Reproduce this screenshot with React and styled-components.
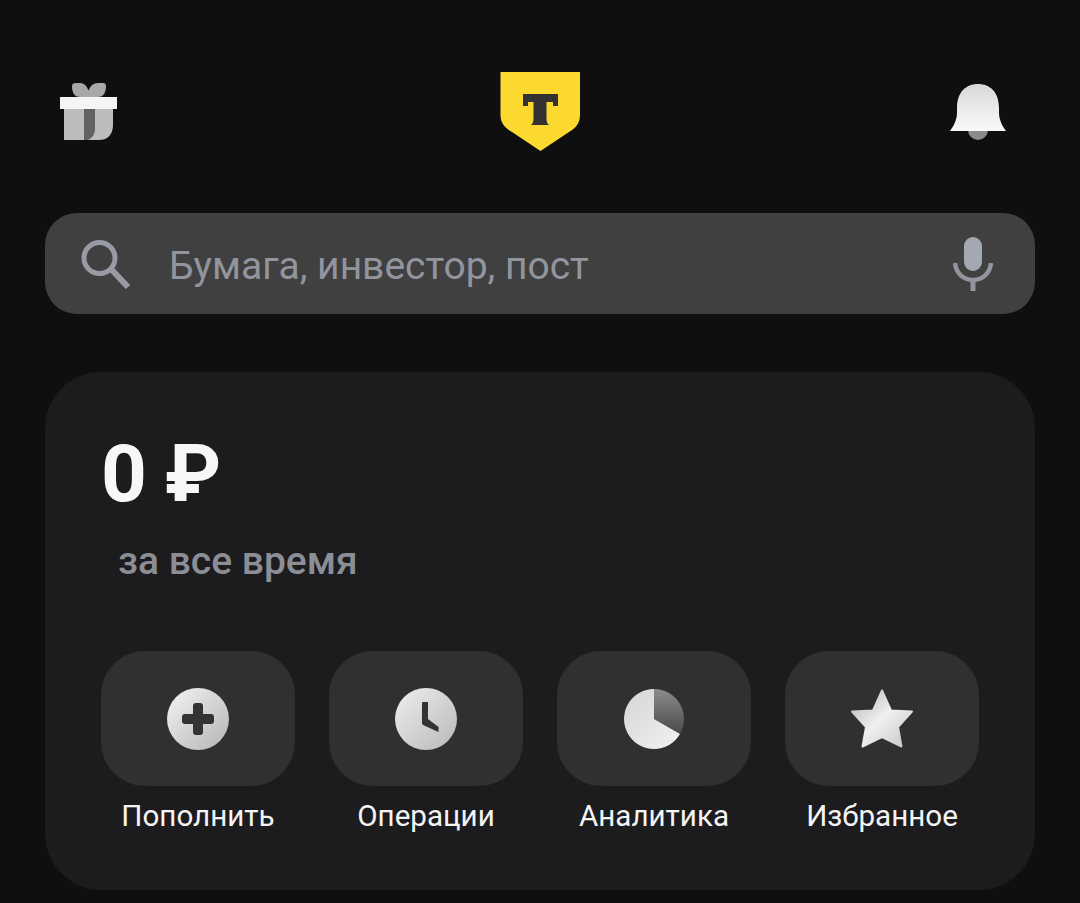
import styled, { createGlobalStyle } from 'styled-components';

const GlobalStyle = createGlobalStyle`
	html, body {
		margin: 0;
		padding: 0;
		background: #0f0f10;
	}
`;

const Page = styled.div`
	width: 1080px;
	height: 903px;
	box-sizing: border-box;
	padding: 72px 45px 0;
	overflow: hidden;
	background: #0f0f10;
	font-family: Roboto, 'Liberation Sans', sans-serif;
`;

const Header = styled.header`
	height: 79px;
	padding: 0 15px;
	display: grid;
	grid-template-columns: 1fr auto 1fr;
	align-items: start;
`;

const HeaderIcon = styled.svg`
	display: block;
	margin-top: ${(p) => p.$top || 0}px;
	margin-right: ${(p) => p.$right || 0}px;
	justify-self: ${(p) => p.$justify || 'start'};
`;

const SearchBar = styled.div`
	height: 101px;
	margin-top: 62px;
	padding: 0 42px 0 36px;
	box-sizing: border-box;
	display: flex;
	align-items: center;
	border-radius: 32px;
	background: #404040;
`;

const SearchGlyph = styled.svg`
	flex: none;
	margin-right: 38px;
`;

const Placeholder = styled.div`
	flex: 1;
	padding-top: 5px;
	font-size: 39px;
	line-height: 46px;
	color: #92959e;
`;

const Card = styled.section`
	height: 518px;
	margin-top: 58px;
	padding: 56px;
	box-sizing: border-box;
	border-radius: 56px;
	background: #1c1c1e;
`;

const Amount = styled.div`
	font-size: 80px;
	line-height: 92px;
	font-weight: 700;
	word-spacing: -2px;
	color: #f6f7f8;
`;

const Period = styled.div`
	margin: 20px 0 0 17px;
	font-size: 39px;
	line-height: 42px;
	font-weight: 500;
	color: #8c8e96;
`;

const Actions = styled.div`
	margin-top: 69px;
	display: grid;
	grid-template-columns: repeat(4, 194px);
	column-gap: 34px;
`;

const Action = styled.div`
	display: flex;
	flex-direction: column;
	align-items: center;
`;

const Tile = styled.div`
	width: 194px;
	height: 135px;
	display: flex;
	align-items: center;
	justify-content: center;
	border-radius: 44px;
	background: #303032;
`;

const Label = styled.div`
	margin-top: 13px;
	font-size: 29.6px;
	line-height: 34px;
	white-space: nowrap;
	color: #f4f4f5;
`;

function GiftIcon() {
	return (
		<HeaderIcon $top={11} width="58" height="58" viewBox="0 0 58 58">
			<path d="M12 3Q12 0 16 0H20Q26 0 28.5 7.5Q31 0 38 0H43Q46 0 46 3C46 9 44 14 38 14H20C14 14 12 9 12 3Z" fill="#a8a8a8" />
			<path d="M4 26H53V42C53 51 48 57 39 57H4Z" fill="#bcbcbc" />
			<path d="M24 26H35V46C35 51 32 55 28 57H24Z" fill="#626262" />
			<rect y="14" width="57" height="12" fill="#f5f5f6" />
		</HeaderIcon>
	);
}

function LogoIcon() {
	return (
		<HeaderIcon width="80" height="79" viewBox="0 0 80 79">
			<path d="M0.5 0H80V43C80 51 76 56 69 60L40.5 79L12 60C5 56 0.5 51 0.5 43Z" fill="#fbd92e" />
			<path d="M23 22H58V34H53V30H46.5V47C46.5 50 47.5 52 49 53H31C32.5 52 33.5 50 33.5 47V30H28V34H23Z" fill="#333230" />
		</HeaderIcon>
	);
}

function BellIcon() {
	return (
		<HeaderIcon $top={12} $right={14} $justify="end" width="56" height="57" viewBox="0 0 56 57">
			<defs>
				<linearGradient id="bellFill" x1="0" y1="0" x2="0" y2="1">
					<stop offset="0" stopColor="#d8d8d8" />
					<stop offset="1" stopColor="#fafafa" />
				</linearGradient>
			</defs>
			<circle cx="28" cy="46" r="10" fill="#8b8b8b" />
			<path d="M28 0C40 0 49 8 49 24V29C49 36 53 43 56 47H0C3 43 7 36 7 29V24C7 8 16 0 28 0Z" fill="url(#bellFill)" />
		</HeaderIcon>
	);
}

function SearchIcon() {
	return (
		<SearchGlyph width="50" height="50" viewBox="0 0 50 50" fill="none">
			<circle cx="18.5" cy="19" r="15.5" stroke="#989ba4" strokeWidth="5" />
			<path d="M30 30L47 48" stroke="#989ba4" strokeWidth="6" />
		</SearchGlyph>
	);
}

function MicIcon() {
	return (
		<svg width="40" height="54" viewBox="0 0 40 54" fill="none">
			<rect x="11" y="0" width="18" height="34" rx="9" fill="#a3a8b2" />
			<path d="M2 26C3 36 10 43 20 43C30 43 37 36 38 26" stroke="#92959e" strokeWidth="4.5" />
			<path d="M20 43V54" stroke="#92959e" strokeWidth="5" />
		</svg>
	);
}

function PlusIcon() {
	return (
		<svg width="62" height="62" viewBox="0 0 62 62">
			<defs>
				<linearGradient id="plusFill" x1="0" y1="0" x2="1" y2="1">
					<stop offset="0" stopColor="#f4f4f4" />
					<stop offset="1" stopColor="#b5b5b5" />
				</linearGradient>
			</defs>
			<circle cx="31" cy="31" r="31" fill="url(#plusFill)" />
			<rect x="15" y="26" width="32" height="10" rx="3" fill="#333335" />
			<rect x="26" y="15" width="10" height="32" rx="3" fill="#333335" />
		</svg>
	);
}

function ClockIcon() {
	return (
		<svg width="62" height="62" viewBox="0 0 62 62">
			<defs>
				<linearGradient id="clockFill" x1="0" y1="0" x2="1" y2="1">
					<stop offset="0" stopColor="#efefef" />
					<stop offset="1" stopColor="#b8b8b8" />
				</linearGradient>
			</defs>
			<circle cx="31" cy="31" r="31" fill="url(#clockFill)" />
			<path d="M27 15Q27 14 28 14H33V31L43.5 39V44L28 37Q27 36 27 35Z" fill="#333335" />
		</svg>
	);
}

function PieIcon() {
	return (
		<svg width="60" height="60" viewBox="0 0 60 60">
			<defs>
				<linearGradient id="pieLight" x1="0" y1="0" x2="1" y2="1">
					<stop offset="0" stopColor="#d4d5d6" />
					<stop offset="1" stopColor="#f2f2f3" />
				</linearGradient>
				<linearGradient id="pieDark" x1="0" y1="0" x2="0" y2="1">
					<stop offset="0" stopColor="#8c8c8c" />
					<stop offset="1" stopColor="#4a4a4c" />
				</linearGradient>
			</defs>
			<path d="M30 30V0A30 30 0 0 1 56 45Z" fill="url(#pieDark)" />
			<path d="M30 30L56 45A30 30 0 1 1 30 0Z" fill="url(#pieLight)" />
		</svg>
	);
}

function StarIcon() {
	return (
		<svg width="64" height="60" viewBox="0 0 64 60">
			<defs>
				<linearGradient id="starFill" x1="0" y1="0" x2="1" y2="1">
					<stop offset="0" stopColor="#b4b4b4" />
					<stop offset="0.5" stopColor="#f0f0f0" />
					<stop offset="1" stopColor="#c4c4c4" />
				</linearGradient>
			</defs>
			<path
				d="M32 1.5L41 21.5L62 22.5L48 38L51.5 57.5L32 48L12.5 57.5L16 38L2 22.5L23 21.5Z"
				fill="url(#starFill)"
				stroke="url(#starFill)"
				strokeWidth="2"
				strokeLinejoin="round"
			/>
		</svg>
	);
}

const actions = [
	{ label: 'Пополнить', icon: <PlusIcon /> },
	{ label: 'Операции', icon: <ClockIcon /> },
	{ label: 'Аналитика', icon: <PieIcon /> },
	{ label: 'Избранное', icon: <StarIcon /> },
];

export default function App() {
	return (
		<>
			<GlobalStyle />
			<Page>
				<Header>
					<GiftIcon />
					<LogoIcon />
					<BellIcon />
				</Header>
				<SearchBar>
					<SearchIcon />
					<Placeholder>Бумага, инвестор, пост</Placeholder>
					<MicIcon />
				</SearchBar>
				<Card>
					<Amount>0 ₽</Amount>
					<Period>за все время</Period>
					<Actions>
						{actions.map((item) => (
							<Action key={item.label}>
								<Tile>{item.icon}</Tile>
								<Label>{item.label}</Label>
							</Action>
						))}
					</Actions>
				</Card>
			</Page>
		</>
	);
}
